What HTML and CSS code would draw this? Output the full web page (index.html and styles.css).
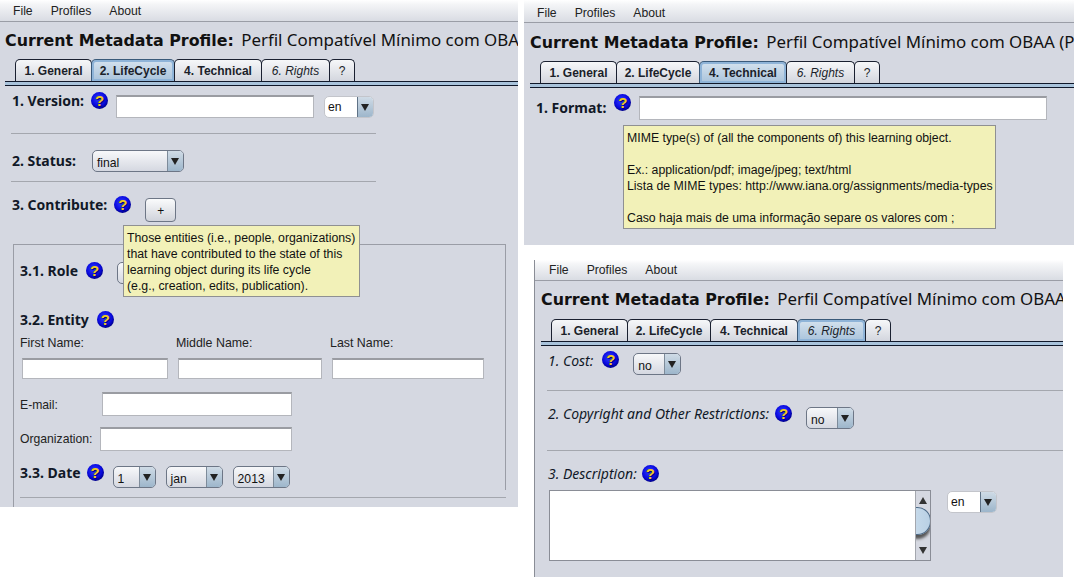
FILE: index.html
```html
<!DOCTYPE html>
<html lang="en">
<head>
<meta charset="utf-8">
<title>Metadata Profile Editor</title>
<link rel="stylesheet" href="styles.css">
</head>
<body>
<section class="win win-a">
  <nav class="menu"><span>File</span><span>Profiles</span><span>About</span></nav>
  <h1 class="title"><b>Current Metadata Profile:</b> Perfil Compatível Mínimo com OBAA</h1>
  <div class="tabs">
    <span class="tab t1">1. General</span><span class="tab t2 on">2. LifeCycle</span><span class="tab t3">4. Technical</span><span class="tab t4 it">6. Rights</span><span class="tab t5 q">?</span>
  </div>
  <div class="row a-version">
    <span class="lbl">1. Version:</span><i class="help">?</i>
    <div class="input w198"></div>
    <div class="combo lang w50"><span class="val">en</span><span class="arrow"></span></div>
  </div>
  <hr class="rule w365">
  <div class="row a-status">
    <span class="lbl">2. Status:</span>
    <div class="combo w92"><span class="val">final</span><span class="arrow"></span></div>
  </div>
  <hr class="rule w365">
  <div class="row a-contrib">
    <span class="lbl">3. Contribute:</span><i class="help">?</i>
    <div class="btn">+</div>
  </div>
  <div class="panel">
    <div class="row p-role">
      <span class="lbl">3.1. Role</span><i class="help">?</i>
      <div class="combo w92"><span class="val"></span><span class="arrow"></span></div>
    </div>
    <div class="row p-entity">
      <span class="lbl">3.2. Entity</span><i class="help">?</i>
    </div>
    <div class="names">
      <label class="name n1">First Name:<span class="input"></span></label>
      <label class="name n2">Middle Name:<span class="input"></span></label>
      <label class="name n3">Last Name:<span class="input"></span></label>
    </div>
    <div class="row p-mail"><span class="plain">E-mail:</span><div class="input w190"></div></div>
    <div class="row p-org"><span class="plain">Organization:</span><div class="input w192"></div></div>
    <div class="row p-date">
      <span class="lbl">3.3. Date</span><i class="help">?</i>
      <div class="combo w43"><span class="val">1</span><span class="arrow"></span></div>
      <div class="combo w57"><span class="val">jan</span><span class="arrow"></span></div>
      <div class="combo w57"><span class="val">2013</span><span class="arrow"></span></div>
    </div>
    <hr class="rule p-rule">
  </div>
  <div class="tip a-tip">Those entities (i.e., people, organizations)<br>that have contributed to the state of this<br>learning object during its life cycle<br>(e.g., creation, edits, publication).</div>
</section>

<section class="win win-b">
  <nav class="menu"><span>File</span><span>Profiles</span><span>About</span></nav>
  <h1 class="title"><b>Current Metadata Profile:</b> Perfil Compatível Mínimo com OBAA (P</h1>
  <div class="tabs">
    <span class="tab t1">1. General</span><span class="tab t2">2. LifeCycle</span><span class="tab t3 on">4. Technical</span><span class="tab t4 it">6. Rights</span><span class="tab t5 q">?</span>
  </div>
  <div class="row b-format">
    <span class="lbl">1. Format:</span><i class="help">?</i>
    <div class="input w408"></div>
  </div>
  <div class="tip b-tip">MIME type(s) of (all the components of) this learning object.<br><br>Ex.: application/pdf; image/jpeg; text/html<br>Lista de MIME types: http://www.iana.org/assignments/media-types<br><br>Caso haja mais de uma informação separe os valores com ;</div>
</section>

<section class="win win-c">
  <nav class="menu"><span>File</span><span>Profiles</span><span>About</span></nav>
  <h1 class="title"><b>Current Metadata Profile:</b> Perfil Compatível Mínimo com OBAA</h1>
  <div class="tabs">
    <span class="tab t1">1. General</span><span class="tab t2">2. LifeCycle</span><span class="tab t3">4. Technical</span><span class="tab t4 it on">6. Rights</span><span class="tab t5 q">?</span>
  </div>
  <div class="row c-cost">
    <span class="lbl it">1. Cost:</span><i class="help">?</i>
    <div class="combo w48"><span class="val">no</span><span class="arrow"></span></div>
  </div>
  <hr class="rule c-rule">
  <div class="row c-copy">
    <span class="lbl it">2. Copyright and Other Restrictions:</span><i class="help">?</i>
    <div class="combo w48"><span class="val">no</span><span class="arrow"></span></div>
  </div>
  <hr class="rule c-rule">
  <div class="row c-desc">
    <span class="lbl it">3. Description:</span><i class="help">?</i>
  </div>
  <div class="row c-area">
    <div class="area">
      <div class="scroll">
        <span class="sb-up"></span>
        <span class="thumb"></span>
        <span class="sb-down"></span>
      </div>
    </div>
    <div class="combo lang w50"><span class="val">en</span><span class="arrow"></span></div>
  </div>
</section>
</body>
</html>
```
FILE: styles.css
```css
* { box-sizing: border-box; }
html, body { margin: 0; padding: 0; background: #fff; }
body { position: relative; width: 1082px; height: 581px; overflow: hidden; font: 12.2px "Liberation Sans", Arial, sans-serif; color: #111; }

.win { position: absolute; background: #d5d8e1; overflow: hidden; }
.win-a { left: 0; top: 0; width: 518px; height: 507px; }
.win-b { left: 524px; top: 0; width: 550px; height: 245px; }
.win-c { left: 534px; top: 260px; width: 529px; height: 317px; border-left: 1px solid #8a8d96; }

.menu { display: flex; gap: 18px; height: 22px; padding: 4px 0 0 13px; line-height: 15px; color: #222;
  background: linear-gradient(#fff, #f4f5f7 20%, #d9dce3); border-bottom: 1px solid #9a9da6; }
.win-b .menu { height: 23px; padding-top: 6px; }
.win-c .menu { height: 21px; padding: 3px 0 0 14px; }

.title { margin: 7px 0 0 5px; height: 22px; font: 400 16.9px/22px "Noto Sans", sans-serif; color: #111; white-space: nowrap; }
.title b { font: 700 15.85px/22px "DejaVu Sans", sans-serif; margin-right: 3px; }
.win-b .title { margin: 8px 0 0 6px; }
.win-c .title { margin: 7px 0 0 6px; }

.tabs { display: flex; height: 27px; margin: 8px 0 0 5px; padding-left: 10px;
  background: linear-gradient(#0000 22px, #10182a 22px, #10182a 23px, #a9c3db 23px, #a9c3db 26px, #10182a 26px); }
.win-b .tabs { margin: 8px 0 0 6px; }
.win-c .tabs { margin: 9px 0 0 6px; }
.tab { height: 22px; border: 1px solid #1a2030; border-bottom: 0; border-radius: 5px 5px 0 0; margin-right: -1px; text-align: center;
  font: 700 12px/22px "Liberation Sans", sans-serif; color: #1b1f2a; background: linear-gradient(#f6f7f9, #d3d6de); }
.tab.it { font-weight: 400; font-style: italic; }
.tab.q { font-weight: 400; }
.tab.t1 { width: 77px; } .tab.t2 { width: 84px; } .tab.t3 { width: 88px; } .tab.t4 { width: 69px; } .tab.t5 { width: 26px; }
.tab.on { background: linear-gradient(#d5e2ee, #a9c3db); border-color: #3a5a7a; box-shadow: inset 0 0 0 2px #8fb4d8; }

.row { display: flex; align-items: flex-start; }
.lbl { font: 700 14px/18px "Noto Sans", sans-serif; color: #111827; white-space: nowrap; }
.lbl.it { font-weight: 400; font-style: italic; }
.plain { line-height: 16px; color: #222; }

.help { flex: none; display: block; width: 17px; height: 17px; border-radius: 50%; text-align: center;
  font: 700 15px/17px "Liberation Sans", sans-serif; color: #f0cc20; text-shadow: 1px 1px 1px #000070;
  background: radial-gradient(circle at 45% 40%, #3340ff 0, #0a0ae0 50%, #000090 72%, #000 90%); }

.input { display: block; height: 24px; background: #fff; border: 1px solid #b4b6bc; border-top: 2px solid #9a9ca2; }
.w198 { width: 198px; } .w190 { width: 190px; } .w192 { width: 192px; } .w408 { width: 408px; }

.combo { display: flex; height: 22px; border: 1px solid #6d7686; border-radius: 5px; background: linear-gradient(#f7f8fa, #d5d8e1); overflow: hidden; flex: none; }
.combo .val { flex: 1; padding: 0 0 0 4px; font: 12.2px/24px "Liberation Sans", sans-serif; color: #111; }
.combo .arrow { flex: none; width: 16px; background: linear-gradient(#cfdbe6, #9db6cb); border-left: 1px solid #7d8b9a; position: relative; }
.combo .arrow::after { content: ""; position: absolute; left: 3px; top: 7px; border: 4px solid transparent; border-top: 7px solid #222; border-bottom: 0; }
.combo.lang { background: #fff; border-color: #c3c5cb; }
.combo.lang .val { line-height: 21px; padding-left: 3px; }
.combo.lang .arrow { border-color: #5f7286; }
.w50 { width: 50px; } .w92 { width: 92px; } .w48 { width: 48px; } .w43 { width: 43px; } .w57 { width: 57px; }

.btn { width: 31px; height: 24px; border: 1px solid #6d7686; border-radius: 4px; text-align: center; font: 12px/24px "Liberation Sans", sans-serif;
  background: linear-gradient(#fafbfc, #d0d3db); }

.rule { border: 0; height: 1px; background: #a4a7ae; margin: 0; }
.w365 { width: 365px; margin-left: 11px; }

/* Window A */
.a-version { height: 47px; padding: 9px 0 0 12px; }
.a-version .lbl { margin-top: -3px; }
.a-version .help { margin: -3px 0 0 7px; }
.a-version .input { margin-left: 8px; height: 23px; }
.a-version .combo { margin: 1px 0 0 10px; }
.a-status { height: 47px; padding: 16px 0 0 12px; }
.a-status .lbl { margin-top: 2px; }
.a-status .combo { margin-left: 16px; }
.a-contrib { height: 62px; padding: 14px 0 0 12px; }
.a-contrib .help { margin-left: 7px; }
.a-contrib .btn { margin: 2px 0 0 14px; }

.panel { margin-left: 13px; width: 493px; height: 265px; border-top: 1px solid #9a9da6; border-left: 1px solid #9a9da6; position: relative; }
.panel::after { content: ""; position: absolute; right: 0; top: 0; width: 1px; height: 245px; background: #9a9da6; }
.p-role { height: 66px; padding: 17px 0 0 6px; }
.p-role .help { margin-left: 8px; }
.p-role .combo { margin-left: 14px; }
.p-entity { height: 23px; padding-left: 6px; }
.p-entity .help { margin-left: 8px; }
.names { display: flex; height: 44px; padding: 0 0 0 6px; margin-top: 1px; }
.name { display: flex; flex-direction: column; line-height: 16px; color: #222; font-size: 12.4px; }
.name .input { margin-top: 7px; margin-left: 2px; }
.n1 { width: 156px; } .n1 .input { width: 146px; }
.n2 { width: 154px; } .n2 .input { width: 144px; }
.n3 { width: 154px; } .n3 .input { width: 152px; }
.p-mail { height: 48px; padding: 13px 0 0 6px; }
.p-mail .plain { width: 82px; margin-top: 5px; }
.p-org { height: 35px; padding-left: 6px; }
.p-org .plain { width: 80px; margin-top: 4px; }
.p-date { height: 40px; padding: 3px 0 0 6px; }
.p-date .lbl { margin-top: -1px; }
.p-date .help { margin: -1px 0 0 6px; }
.p-date .combo { margin: 1px 10px 0 0; }
.p-date .help + .combo { margin-left: 9px; }
.p-rule { position: absolute; left: 6px; right: 0; bottom: 11px; }

.tip { position: absolute; background: #f2f1b8; border: 1px solid #8f9092; color: #111; font-size: 12.3px; line-height: 16px; padding: 4px 3px; white-space: nowrap; }
.a-tip { left: 123px; top: 225px; width: 237px; height: 72px; }
.b-tip { left: 99px; top: 125px; width: 373px; height: 104px; }

/* Window B */
.b-format { padding: 8px 0 0 12px; height: 36px; }
.b-format .lbl { margin-top: 3px; }
.b-format .help { margin: -2px 0 0 8px; }
.b-format .input { margin-left: 8px; }

/* Window C */
.c-cost { height: 44px; padding: 7px 0 0 13px; }
.c-cost .lbl { margin-top: -1px; }
.c-cost .help { margin: -2px 0 0 9px; }
.c-cost .combo { margin-left: 14px; }
.c-rule { margin-left: 12px; }
.c-copy { height: 59px; padding: 14px 0 0 13px; }
.c-copy .help { margin: 0 0 0 6px; }
.c-copy .combo { margin: 2px 0 0 14px; }
.c-desc { height: 39px; padding: 14px 0 0 13px; }
.c-desc .help { margin-left: 5px; }
.c-area { padding-left: 14px; }
.area { width: 382px; height: 71px; background: #fff; border: 1px solid #8a8d96; position: relative; }
.c-area .combo { margin: 1px 0 0 16px; }
.scroll { position: absolute; right: 0; top: 0; bottom: 0; width: 15px; background: #d5d8e1; border-left: 1px solid #a4a7ae; overflow: hidden; }
.sb-up, .sb-down { position: absolute; left: 3px; border: 4px solid transparent; }
.sb-up { top: 6px; border-bottom: 7px solid #333; border-top: 0; }
.sb-down { bottom: 6px; border-top: 7px solid #333; border-bottom: 0; }
.thumb { position: absolute; left: -12px; top: 16px; width: 27px; height: 28px; border-radius: 50%; border: 1px solid #4d6b88; background: linear-gradient(90deg, #cfe0ee, #b9d0e4); box-shadow: 0 4px 3px #555; }
```
